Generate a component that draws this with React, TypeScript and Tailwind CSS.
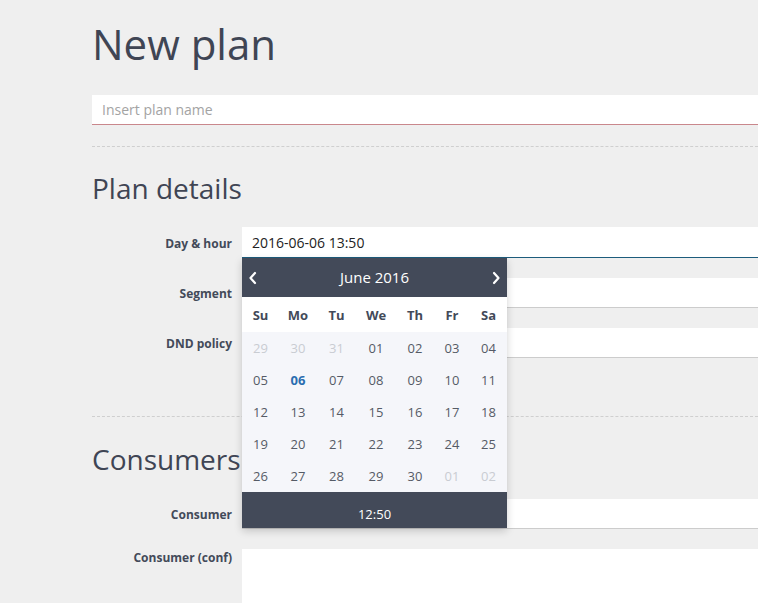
import React from "react";

const font = { fontFamily: '"Open Sans", "Liberation Sans", sans-serif' };

function Chevron({ dir }: { dir: "left" | "right" }) {
  return (
    <svg width="10" height="14" viewBox="0 0 10 14" fill="none">
      {dir === "left" ? (
        <polyline points="7,2 2.5,7 7,12" stroke="white" strokeWidth="2.2" strokeLinecap="round" strokeLinejoin="round" />
      ) : (
        <polyline points="3,2 7.5,7 3,12" stroke="white" strokeWidth="2.2" strokeLinecap="round" strokeLinejoin="round" />
      )}
    </svg>
  );
}

const weeks: { d: string; muted?: boolean; sel?: boolean }[][] = [
  [{ d: "29", muted: true }, { d: "30", muted: true }, { d: "31", muted: true }, { d: "01" }, { d: "02" }, { d: "03" }, { d: "04" }],
  [{ d: "05" }, { d: "06", sel: true }, { d: "07" }, { d: "08" }, { d: "09" }, { d: "10" }, { d: "11" }],
  [{ d: "12" }, { d: "13" }, { d: "14" }, { d: "15" }, { d: "16" }, { d: "17" }, { d: "18" }],
  [{ d: "19" }, { d: "20" }, { d: "21" }, { d: "22" }, { d: "23" }, { d: "24" }, { d: "25" }],
  [{ d: "26" }, { d: "27" }, { d: "28" }, { d: "29" }, { d: "30" }, { d: "01", muted: true }, { d: "02", muted: true }],
];

const cols = "grid grid-cols-[37px_38px_39px_40px_38px_36px_37px]";

function Calendar() {
  return (
    <div className="absolute left-0 top-full z-10 w-[265px] shadow-[0_3px_8px_rgba(0,0,0,0.18)]">
      <div className="flex h-[39px] items-center justify-between bg-[#434a59] px-[6px] text-white">
        <Chevron dir="left" />
        <span className="text-[15px]">June 2016</span>
        <Chevron dir="right" />
      </div>
      <div className={`${cols} h-[35px] items-center bg-white pt-[2px] text-center text-[13px] font-bold text-[#434a59]`}>
        {["Su", "Mo", "Tu", "We", "Th", "Fr", "Sa"].map((w) => (
          <span key={w}>{w}</span>
        ))}
      </div>
      <div className="bg-[#f5f6fa]">
        {weeks.map((row, i) => (
          <div key={i} className={`${cols} h-[32px] items-center pt-[2px] text-center text-[13px]`}>
            {row.map((c, j) => (
              <span
                key={j}
                className={
                  c.sel
                    ? "font-bold text-[#2a6db0]"
                    : c.muted
                    ? "text-[#c9ccd2]"
                    : "text-[#555b66]"
                }
              >
                {c.d}
              </span>
            ))}
          </div>
        ))}
      </div>
      <div className="flex h-[36px] items-center justify-center bg-[#434a59] pt-[10px] text-[13px] text-white">
        12:50
      </div>
    </div>
  );
}

function Row({ label, children }: { label: string; children: React.ReactNode }) {
  return (
    <div className="flex items-center">
      <div className="w-[140px] shrink-0 pt-[2px] text-right text-[12px] font-bold text-[#434a59]">{label}</div>
      <div className="ml-[10px] flex-1">{children}</div>
    </div>
  );
}

export default function App() {
  return (
    <div style={font} className="h-[603px] overflow-hidden bg-[#efefef] pl-[92px] text-[#3f4554]">
      <h1 className="pt-[19px] text-[42px] leading-[50px]">New plan</h1>
      <div className="mt-[26px] flex h-[30px] items-center border-b border-[#c9878c] bg-white pl-[10px] text-[14px] text-[#a3a3a3]">
        Insert plan name
      </div>
      <div className="mt-[21px] border-t border-dashed border-[#cfcfcf]" />
      <h2 className="mt-[24px] text-[28px] leading-[34px]">Plan details</h2>

      <div className="mt-[22px] flex flex-col gap-[20px]">
        <Row label="Day & hour">
          <div className="relative">
            <div className="flex h-[31px] items-center border-b border-[#1d5c7c] bg-white pl-[10px] text-[14px] text-[#222]">
              2016-06-06 13:50
            </div>
            <Calendar />
          </div>
        </Row>
        <Row label="Segment">
          <div className="h-[30px] border-b border-[#cccccc] bg-white" />
        </Row>
        <Row label="DND policy">
          <div className="h-[30px] border-b border-[#cccccc] bg-white" />
        </Row>
      </div>

      <div className="mt-[58px] border-t border-dashed border-[#cfcfcf]" />
      <h2 className="mt-[25px] text-[28px] leading-[34px]">Consumers</h2>

      <div className="mt-[23px] flex flex-col gap-[20px]">
        <Row label="Consumer">
          <div className="h-[30px] border-b border-[#cccccc] bg-white" />
        </Row>
        <div className="flex items-start">
          <div className="w-[140px] shrink-0 text-right text-[12px] font-bold text-[#434a59]">Consumer (conf)</div>
          <div className="ml-[10px] h-[120px] flex-1 bg-white" />
        </div>
      </div>
    </div>
  );
}
